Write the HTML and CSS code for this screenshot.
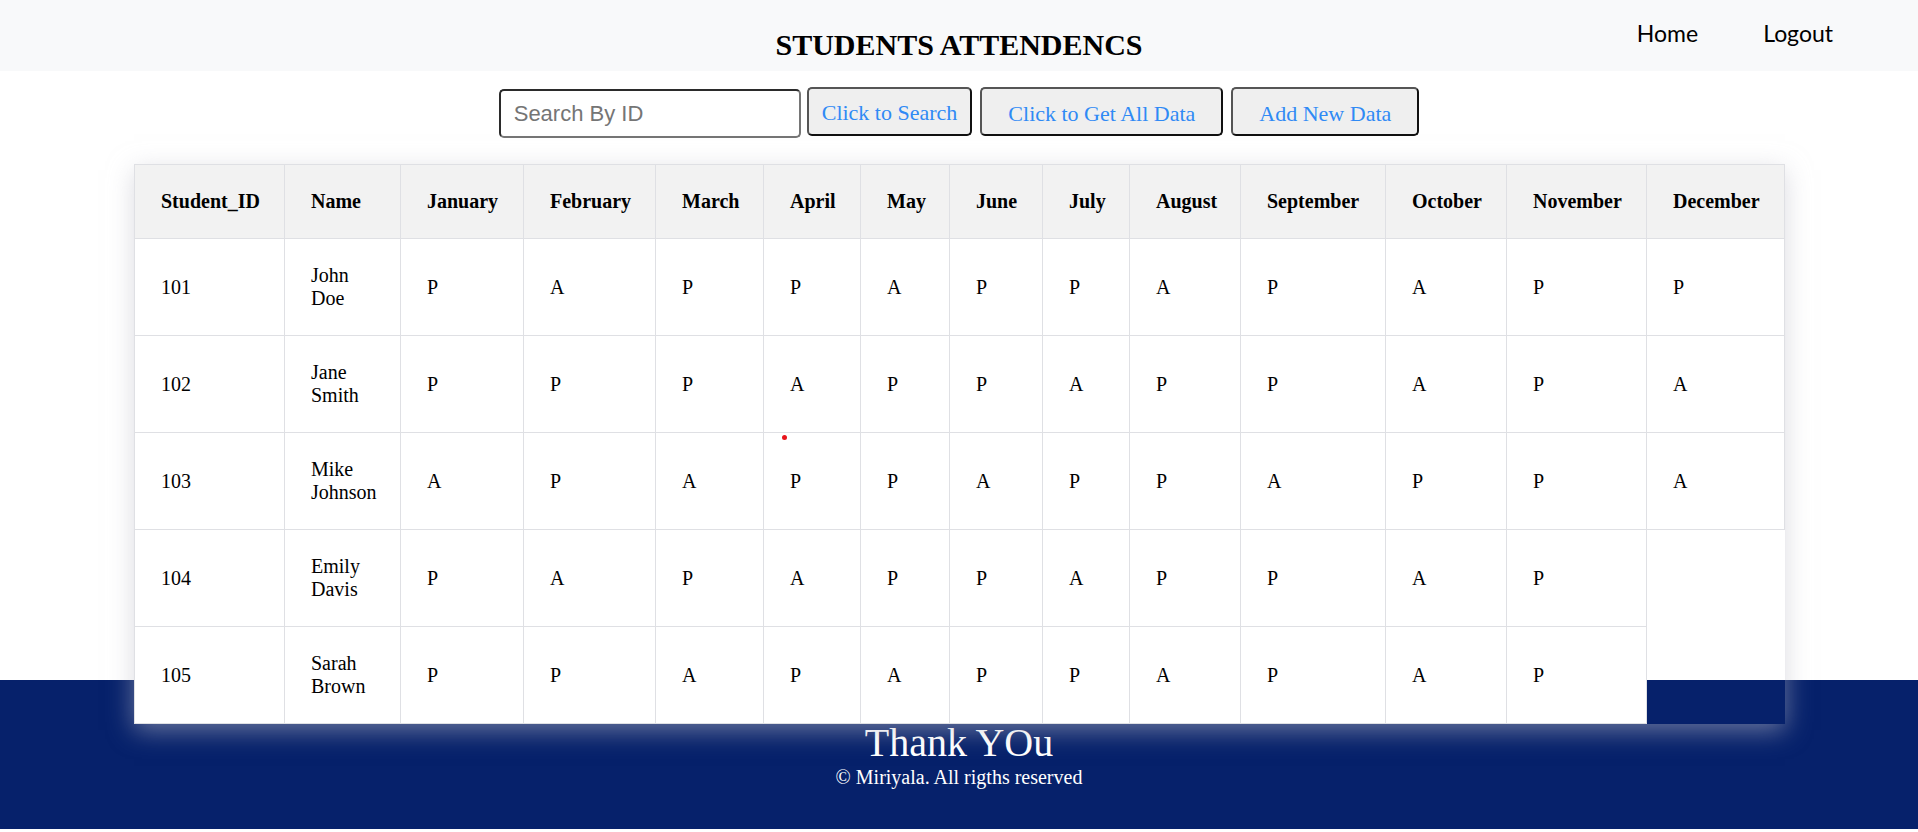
FILE: index.html
```html
<!DOCTYPE html>
<html lang="en">
<head>
<meta charset="utf-8">
<title>Students Attendence</title>
<link rel="stylesheet" href="styles.css">
</head>
<body>
<header class="topbar">
  <div class="spacer"></div>
  <h1 class="title">STUDENTS ATTENDENCS</h1>
  <nav class="nav">
    <a class="nav-link" href="#">Home</a>
    <a class="nav-link" href="#">Logout</a>
  </nav>
</header>
<main class="main">
  <div class="controls">
    <input class="search-input" type="text" placeholder="Search By ID">
    <button class="btn btn-search">Click to Search</button>
    <button class="btn btn-wide">Click to Get All Data</button>
    <button class="btn btn-wide">Add New Data</button>
  </div>
  <div class="table-wrap">
    <table class="att-table">
      <colgroup>
        <col class="w-id"><col class="w-name"><col class="w-jan"><col class="w-feb"><col class="w-mar"><col class="w-apr"><col class="w-may"><col class="w-jun"><col class="w-jul"><col class="w-aug"><col class="w-sep"><col class="w-oct"><col class="w-nov"><col class="w-dec">
      </colgroup>
      <thead>
        <tr><th>Student_ID</th><th>Name</th><th>January</th><th>February</th><th>March</th><th>April</th><th>May</th><th>June</th><th>July</th><th>August</th><th>September</th><th>October</th><th>November</th><th>December</th></tr>
      </thead>
      <tbody>
        <tr><td>101</td><td>John Doe</td><td>P</td><td>A</td><td>P</td><td>P</td><td>A</td><td>P</td><td>P</td><td>A</td><td>P</td><td>A</td><td>P</td><td>P</td></tr>
        <tr><td>102</td><td>Jane Smith</td><td>P</td><td>P</td><td>P</td><td>A</td><td>P</td><td>P</td><td>A</td><td>P</td><td>P</td><td>A</td><td>P</td><td>A</td></tr>
        <tr><td>103</td><td>Mike Johnson</td><td>A</td><td>P</td><td>A</td><td>P</td><td>P</td><td>A</td><td>P</td><td>P</td><td>A</td><td>P</td><td>P</td><td>A</td></tr>
        <tr><td>104</td><td>Emily Davis</td><td>P</td><td>A</td><td>P</td><td>A</td><td>P</td><td>P</td><td>A</td><td>P</td><td>P</td><td>A</td><td>P</td></tr>
        <tr><td>105</td><td>Sarah Brown</td><td>P</td><td>P</td><td>A</td><td>P</td><td>A</td><td>P</td><td>P</td><td>A</td><td>P</td><td>A</td><td>P</td></tr>
      </tbody>
    </table>
    <span class="dot"></span>
  </div>
</main>
<footer class="footer">
  <div class="thanks">Thank YOu</div>
  <div class="copy">&copy; Miriyala. All rigths reserved</div>
</footer>
</body>
</html>
```

FILE: styles.css
```css
html, body {
  margin: 0;
  padding: 0;
  background: #ffffff;
  font-family: "Liberation Serif", "Times New Roman", serif;
  color: #000;
}

.topbar {
  height: 71px;
  background: #f8f9fa;
  display: grid;
  grid-template-columns: 1fr auto 1fr;
  align-items: start;
}

.title {
  margin: 0;
  padding-top: 28px;
  font-size: 30px;
  font-weight: bold;
  line-height: 34px;
  text-align: center;
}

.nav {
  justify-self: end;
  display: flex;
  gap: 65px;
  padding-top: 19px;
  padding-right: 85px;
}

.nav-link {
  font-family: Lato, "Open Sans", sans-serif;
  font-size: 23px;
  line-height: 28px;
  color: #000;
  text-decoration: none;
}

.main {
  height: 609px;
  padding-top: 16px;
  box-sizing: border-box;
}

.controls {
  display: flex;
  justify-content: center;
  align-items: flex-start;
}

.search-input {
  margin: 2px 6px 0 0;
  width: 302px;
  box-sizing: border-box;
  height: 49px;
  padding: 10px 13px;
  font-family: "Liberation Sans", Arial, sans-serif;
  font-size: 22px;
  line-height: 25px;
  border: 2px solid #767676;
  border-top-color: #2b2b2b;
  border-left-color: #2b2b2b;
  border-radius: 5px;
  background: #fff;
  color: #000;
  outline: none;
}

.search-input::placeholder {
  color: #757575;
}

.btn {
  height: 49px;
  box-sizing: border-box;
  padding: 12px 26px 8px;
  font-family: "Liberation Serif", "Times New Roman", serif;
  font-size: 22px;
  line-height: 25px;
  color: #2f8af5;
  background: #efefef;
  border: 2px solid #111;
  border-top-color: #555;
  border-left-color: #555;
  border-radius: 5px;
  margin-left: 8px;
  cursor: pointer;
}

.btn-search {
  padding: 11px 13px 9px;
  margin-left: 0;
}

.table-wrap {
  position: relative;
  z-index: 1;
  width: 1650px;
  margin: 26px auto 0;
}

.att-table {
  width: 1650px;
  table-layout: fixed;
  border-collapse: collapse;
  box-shadow: 0 6px 24px rgba(190, 190, 200, 0.55);
}

.w-id { width: 150px; }
.w-name { width: 116px; }
.w-jan { width: 123px; }
.w-feb { width: 132px; }
.w-mar { width: 108px; }
.w-apr { width: 97px; }
.w-may { width: 89px; }
.w-jun { width: 93px; }
.w-jul { width: 87px; }
.w-aug { width: 111px; }
.w-sep { width: 145px; }
.w-oct { width: 121px; }
.w-nov { width: 140px; }
.w-dec { width: 138px; }

.att-table th,
.att-table td {
  border: 1px solid #dfe0e4;
  padding: 25px 24px 25px 26px;
  text-align: left;
  vertical-align: middle;
  font-size: 20px;
  line-height: 23px;
  background: #fff;
}

.att-table th {
  background: #f2f2f2;
  font-weight: bold;
}

.dot {
  position: absolute;
  left: 648px;
  top: 271px;
  width: 5px;
  height: 5px;
  border-radius: 50%;
  background: #e8141b;
}

.footer {
  background: #06216b;
  color: #fff;
  text-align: center;
  padding: 40px 0;
}

.thanks {
  font-size: 40px;
  line-height: 46px;
}

.copy {
  font-size: 20px;
  line-height: 23px;
}
```
